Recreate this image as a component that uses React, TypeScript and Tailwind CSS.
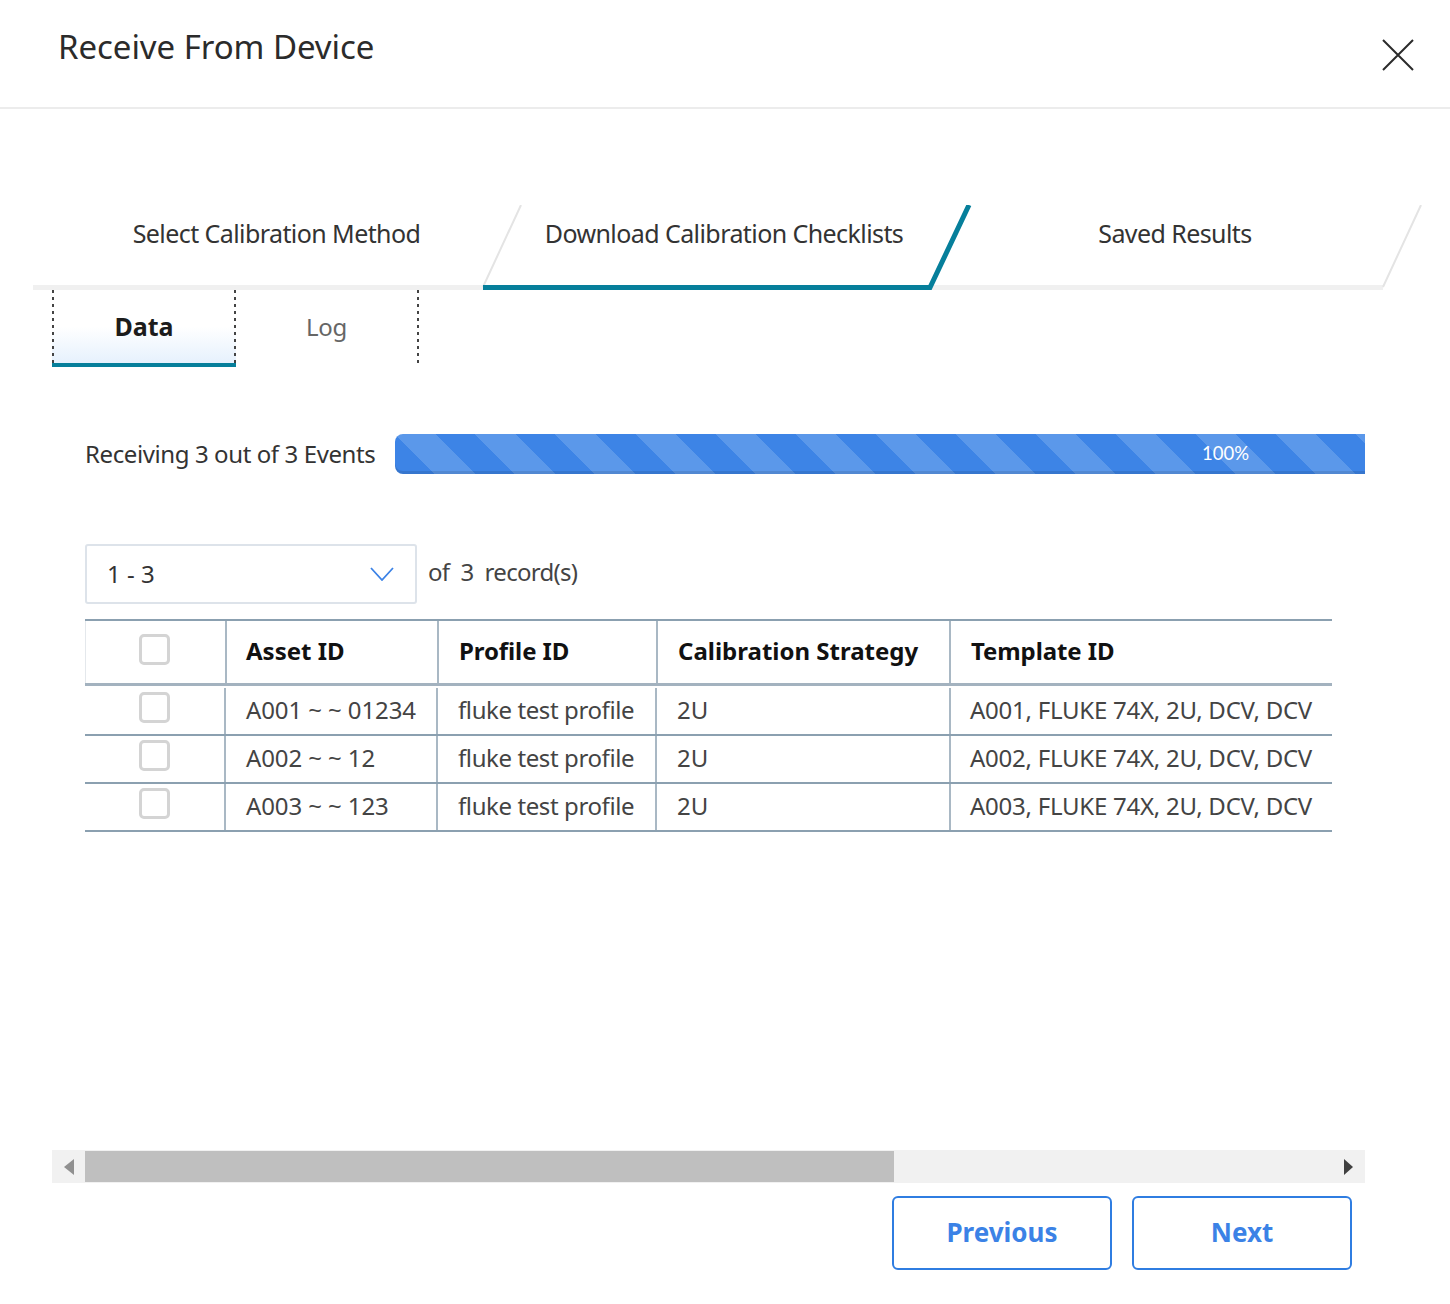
const rows = [
  { asset: 'A001 ~ ~ 01234', template: 'A001, FLUKE 74X, 2U, DCV, DCV' },
  { asset: 'A002 ~ ~ 12', template: 'A002, FLUKE 74X, 2U, DCV, DCV' },
  { asset: 'A003 ~ ~ 123', template: 'A003, FLUKE 74X, 2U, DCV, DCV' },
];

function Checkbox() {
  return <div className="w-[31px] h-[31px] rounded-[5px] border-[3px] border-[#d4d4d4] bg-white" />;
}

function Dots() {
  return <div className="w-[2px] shrink-0 bg-[repeating-linear-gradient(to_bottom,#444_0px,#444_3px,transparent_3px,transparent_7px)]" />;
}

export default function App() {
  return (
    <div className="w-[1450px] h-[1304px] bg-white flex flex-col font-['Noto_Sans',sans-serif] text-[#333]">
      {/* Header */}
      <header className="h-[109px] shrink-0 border-b-2 border-[#ececec] flex justify-between pl-[59px] pr-[36px]">
        <h1 className="text-[33px] leading-[46px] mt-[24px] text-[#2b2b2b] tracking-[-0.05px] -ml-[1px]">Receive From Device</h1>
        <svg className="mt-[39px]" width="32" height="32" viewBox="0 0 32 32" fill="none" stroke="#2b2b2b" strokeWidth="2">
          <path d="M1 1 L31 31 M31 1 L1 31" />
        </svg>
      </header>

      {/* Stepper */}
      <div className="relative mt-[96px] ml-[33px] w-[1390px] h-[85px] flex shrink-0 text-[25px] text-[#333] tracking-[-0.58px]">
        <svg className="absolute inset-0" width="1390" height="85" viewBox="0 0 1390 85" fill="none">
          <path d="M0 82.5 H450 M897 82.5 H1350" stroke="#f0f0f0" strokeWidth="5" />
          <path d="M450 82 L488 0 M1350 82 L1388 0" stroke="#e4e4e4" strokeWidth="2" />
          <path d="M450 82.5 H897 L936 0" stroke="#067f9b" strokeWidth="5" />
        </svg>
        <div className="relative w-[485px] pt-[11px] pl-[2px] text-center leading-[34px]">Select Calibration Method</div>
        <div className="relative w-[412px] pt-[11px] text-center leading-[34px] whitespace-nowrap">Download Calibration Checklists</div>
        <div className="relative w-[490px] pt-[11px] text-center leading-[34px]">Saved Results</div>
      </div>

      {/* Data / Log tabs */}
      <div className="flex ml-[52px] h-[77px] shrink-0 text-[25px]">
        <div className="w-[184px] flex justify-between border-b-[4px] border-[#067f9b] bg-gradient-to-b from-white from-50% to-[#e6f1fd]">
          <Dots />
          <span className="font-bold text-[#1c1c1c] leading-[73px]">Data</span>
          <Dots />
        </div>
        <div className="w-[181px] text-center text-[24px] text-[#666] tracking-[-0.3px] leading-[73px]">Log</div>
        <Dots />
      </div>

      {/* Progress */}
      <div className="flex items-center ml-[85px] mt-[67px] h-[40px] shrink-0">
        <span className="w-[310px] text-[24px] text-[#333] tracking-[-0.4px] whitespace-nowrap">Receiving 3 out of 3 Events</span>
        <div className="w-[970px] h-[40px] rounded-l-[8px] flex items-center justify-end pr-[116px] shadow-[inset_0_-3px_0_rgba(0,0,0,0.1)] bg-[repeating-linear-gradient(45deg,#3d84e6_0px,#3d84e6_28.28px,#5b98ea_28.28px,#5b98ea_56.57px)]">
          <span className="font-['Lato',sans-serif] text-[18.5px] text-white">100%</span>
        </div>
      </div>

      {/* Page size select */}
      <div className="flex items-center ml-[85px] mt-[70px] h-[60px] shrink-0">
        <div className="w-[332px] h-[60px] border-2 border-[#dde3ea] rounded-[3px] flex items-center justify-between pl-[20px] pr-[21px] text-[24px]">
          <span className="-mt-[1px]">1 - 3</span>
          <svg width="24" height="14" viewBox="0 0 24 14" fill="none" stroke="#3b82e6" strokeWidth="1.8"><path d="M1 1 L12 13 L23 1" /></svg>
        </div>
        <span className="ml-[11px] -mt-[5px] text-[24px] text-[#444] tracking-[-0.7px] whitespace-pre">of  3  record(s)</span>
      </div>

      {/* Table */}
      <div className="ml-[85px] mt-[15px] w-[1247px] h-[213px] shrink-0 text-[24px]">
        <div className="grid grid-cols-[142px_212px_219px_293px_381px] h-[67px] border-t-2 border-b-[3px] border-t-[#8ba0b0] border-b-[#a3b2bf] font-bold text-[#111]">
          <div className="border-l border-[#e4e8ec] border-r-2 border-r-[#a9b8c4] flex justify-center pt-[13px] pr-[2px]"><Checkbox /></div>
          <div className="border-r-2 border-[#a9b8c4] pl-[19px] leading-[60px]">Asset ID</div>
          <div className="border-r-2 border-[#a9b8c4] pl-[20px] leading-[60px] tracking-[-0.1px]">Profile ID</div>
          <div className="border-r-2 border-[#a9b8c4] pl-[20px] leading-[60px] whitespace-nowrap">Calibration Strategy</div>
          <div className="pl-[20px] leading-[60px] tracking-[-0.1px]">Template ID</div>
        </div>
        <div className="mt-[2px]">
          {rows.map((row) => (
            <div key={row.asset} className="grid grid-cols-[141px_212px_219px_294px_381px] h-[48px] border-b-2 border-[#8ba0b0] text-[#444] leading-[43px] whitespace-nowrap">
              <div className="border-r-2 border-[#a9b8c4] flex justify-center pt-[4px] pr-[1px]"><Checkbox /></div>
              <div className="border-r-2 border-[#a9b8c4] pl-[20px] tracking-[-0.1px]">{row.asset}</div>
              <div className="border-r-2 border-[#a9b8c4] pl-[20px] tracking-[-0.4px]">fluke test profile</div>
              <div className="border-r-2 border-[#a9b8c4] pl-[20px]">2U</div>
              <div className="pl-[19px] tracking-[-0.25px]">{row.template}</div>
            </div>
          ))}
        </div>
      </div>

      {/* Horizontal scrollbar */}
      <div className="ml-[52px] mt-[318px] w-[1313px] h-[33px] bg-[#f1f1f1] flex items-center shrink-0">
        <div className="w-[33px] flex justify-center">
          <svg width="10" height="16" viewBox="0 0 10 16"><path d="M10 0 V16 L0 8 Z" fill="#909090" /></svg>
        </div>
        <div className="w-[809px] h-[31px] bg-[#bfbfbf]" />
        <div className="flex-1 flex justify-end pr-[12px]">
          <svg width="9" height="16" viewBox="0 0 9 16"><path d="M0 0 V16 L9 8 Z" fill="#404040" /></svg>
        </div>
      </div>

      {/* Footer buttons */}
      <div className="flex justify-end gap-[20px] mt-[13px] w-[1352px] shrink-0">
        <button className="w-[220px] h-[74px] border-[2.5px] border-[#2f7de1] rounded-[6px] pb-[2px] text-[26px] font-bold text-[#3b82e6]">Previous</button>
        <button className="w-[220px] h-[74px] border-[2.5px] border-[#2f7de1] rounded-[6px] pb-[2px] text-[26px] font-bold text-[#3b82e6]">Next</button>
      </div>
    </div>
  );
}
